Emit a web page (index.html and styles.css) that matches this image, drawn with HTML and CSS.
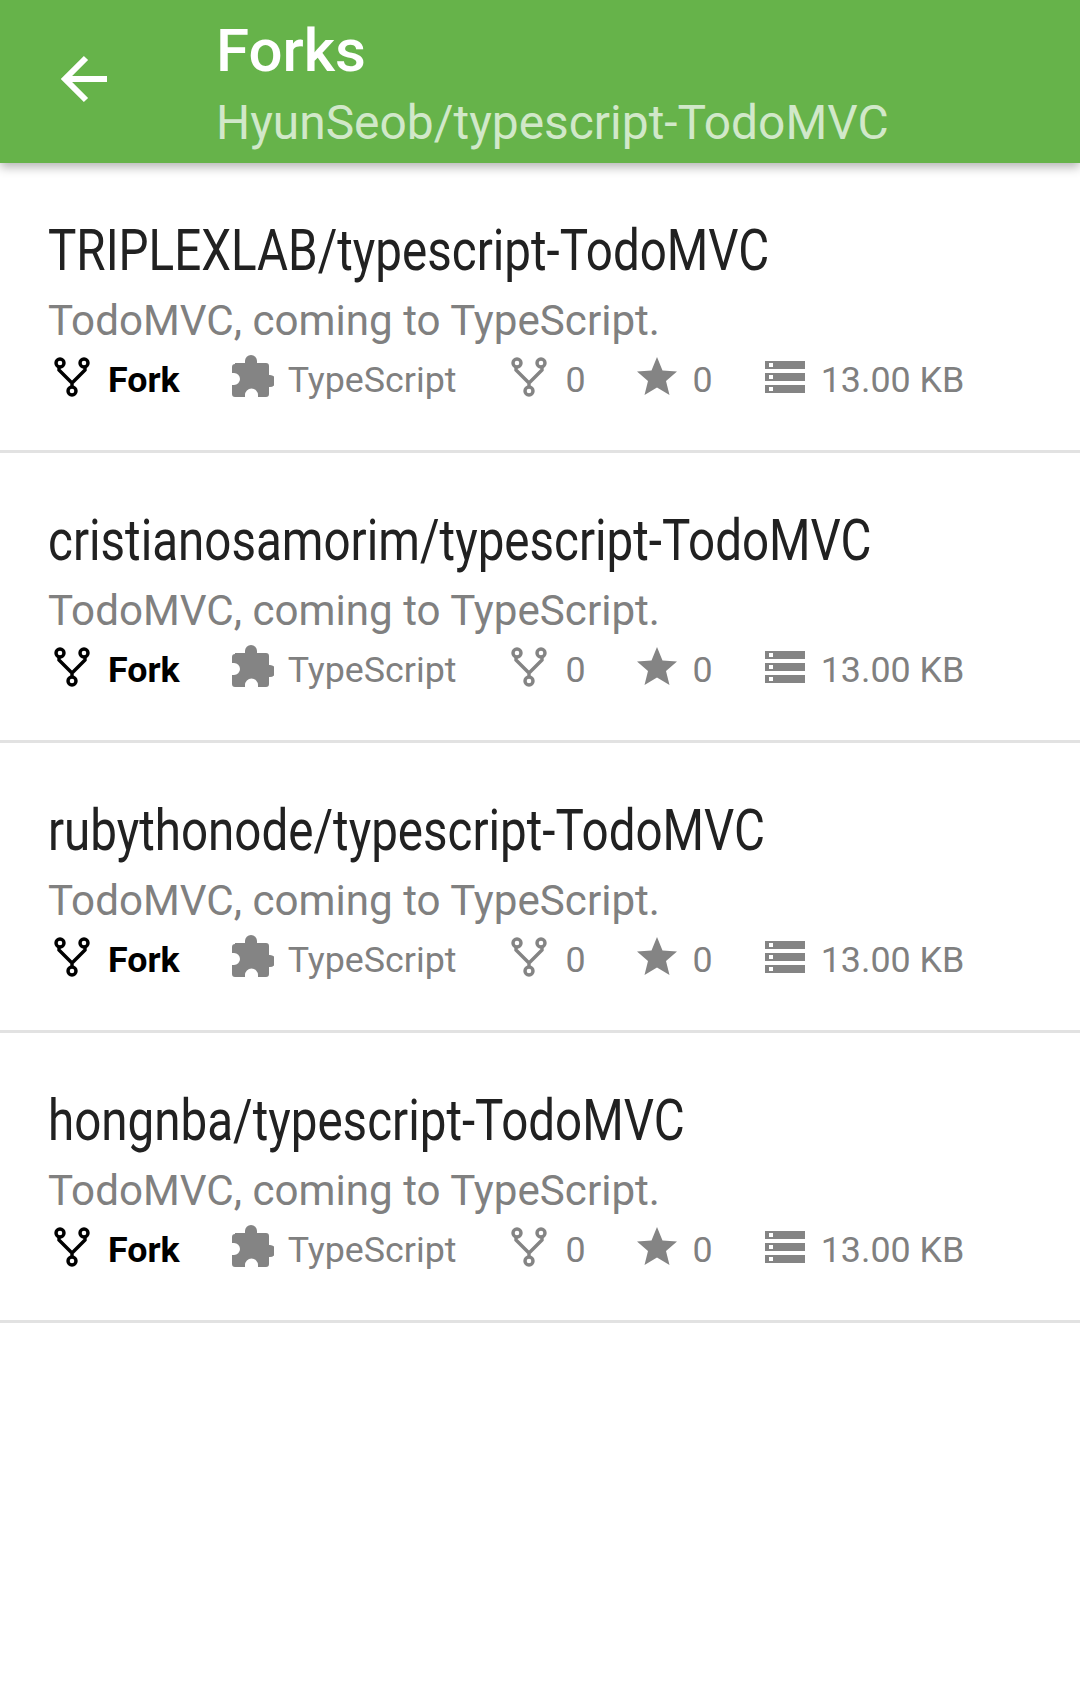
FILE: index.html
```html
<!DOCTYPE html>
<html lang="en">
<head>
    <meta charset="UTF-8">
    <title>Forks</title>
    <link rel="stylesheet" href="styles.css">
</head>
<body>
    <svg class="defs" width="0" height="0">
        <symbol id="i-fork" viewBox="0 0 36 40">
            <circle cx="6" cy="6" r="4" fill="none" stroke="currentColor" stroke-width="3.4"/>
            <circle cx="30" cy="6" r="4" fill="none" stroke="currentColor" stroke-width="3.4"/>
            <circle cx="18" cy="34" r="4" fill="none" stroke="currentColor" stroke-width="3.4"/>
            <path d="M5 10V13L18 26 31 13V10M18 26V30" fill="none" stroke="currentColor" stroke-width="3.4"/>
        </symbol>
        <symbol id="i-puzzle" viewBox="0 0 42 42">
            <path fill="currentColor" d="M3 8h10V6a6 6 0 0 1 12 0v2h9a3 3 0 0 1 3 3v9h1a6 6 0 0 1 0 12h-1v7a3 3 0 0 1-3 3h-8v-2a6.500 6.500 0 0 0-13 0v2H3a3 3 0 0 1-3-3v-9h2a6 6 0 0 0 0-12H0v-6a3 3 0 0 1 3-3z"/>
        </symbol>
        <symbol id="i-star" viewBox="0 0 40 38">
            <path fill="currentColor" d="M20 0l5.500 13.500 14.500 1-11 9.500 3.500 14L20 30.500 7.500 38 11 24 0 14.500l14.500-1z"/>
        </symbol>
        <symbol id="i-size" viewBox="0 0 40 32">
            <path fill="currentColor" fill-rule="evenodd" d="M0 0h40v8H0zM4 2v4h4V2zM0 12h40v8H0zM4 14v4h4v-4zM0 24h40v8H0zM4 26v4h4v-4z"/>
        </symbol>
    </svg>

    <header class="toolbar">
        <svg class="back" viewBox="0 0 48 48"><path d="M47 24H4M26 3 5 24l21 21" fill="none" stroke="currentColor" stroke-width="6"/></svg>
        <div class="toolbar-text">
            <div class="toolbar-title">Forks</div>
            <div class="toolbar-sub">HyunSeob/typescript-TodoMVC</div>
        </div>
    </header>

    <div class="list">
        <div class="repo">
            <div class="repo-name"><span>TRIPLEXLAB/typescript-TodoMVC</span></div>
            <div class="repo-desc">TodoMVC, coming to TypeScript.</div>
            <div class="meta">
                <span class="meta-item fork-tag"><svg class="ic ic-fork"><use href="#i-fork"/></svg>Fork</span>
                <span class="meta-item lang"><svg class="ic ic-puzzle"><use href="#i-puzzle"/></svg>TypeScript</span>
                <span class="meta-item forks"><svg class="ic ic-fork"><use href="#i-fork"/></svg>0</span>
                <span class="meta-item stars"><svg class="ic ic-star"><use href="#i-star"/></svg>0</span>
                <span class="meta-item size"><svg class="ic ic-size"><use href="#i-size"/></svg>13.00 KB</span>
            </div>
        </div>
        <div class="repo">
            <div class="repo-name"><span>cristianosamorim/typescript-TodoMVC</span></div>
            <div class="repo-desc">TodoMVC, coming to TypeScript.</div>
            <div class="meta">
                <span class="meta-item fork-tag"><svg class="ic ic-fork"><use href="#i-fork"/></svg>Fork</span>
                <span class="meta-item lang"><svg class="ic ic-puzzle"><use href="#i-puzzle"/></svg>TypeScript</span>
                <span class="meta-item forks"><svg class="ic ic-fork"><use href="#i-fork"/></svg>0</span>
                <span class="meta-item stars"><svg class="ic ic-star"><use href="#i-star"/></svg>0</span>
                <span class="meta-item size"><svg class="ic ic-size"><use href="#i-size"/></svg>13.00 KB</span>
            </div>
        </div>
        <div class="repo">
            <div class="repo-name"><span>rubythonode/typescript-TodoMVC</span></div>
            <div class="repo-desc">TodoMVC, coming to TypeScript.</div>
            <div class="meta">
                <span class="meta-item fork-tag"><svg class="ic ic-fork"><use href="#i-fork"/></svg>Fork</span>
                <span class="meta-item lang"><svg class="ic ic-puzzle"><use href="#i-puzzle"/></svg>TypeScript</span>
                <span class="meta-item forks"><svg class="ic ic-fork"><use href="#i-fork"/></svg>0</span>
                <span class="meta-item stars"><svg class="ic ic-star"><use href="#i-star"/></svg>0</span>
                <span class="meta-item size"><svg class="ic ic-size"><use href="#i-size"/></svg>13.00 KB</span>
            </div>
        </div>
        <div class="repo">
            <div class="repo-name"><span>hongnba/typescript-TodoMVC</span></div>
            <div class="repo-desc">TodoMVC, coming to TypeScript.</div>
            <div class="meta">
                <span class="meta-item fork-tag"><svg class="ic ic-fork"><use href="#i-fork"/></svg>Fork</span>
                <span class="meta-item lang"><svg class="ic ic-puzzle"><use href="#i-puzzle"/></svg>TypeScript</span>
                <span class="meta-item forks"><svg class="ic ic-fork"><use href="#i-fork"/></svg>0</span>
                <span class="meta-item stars"><svg class="ic ic-star"><use href="#i-star"/></svg>0</span>
                <span class="meta-item size"><svg class="ic ic-size"><use href="#i-size"/></svg>13.00 KB</span>
            </div>
        </div>
    </div>
</body>
</html>
```
FILE: styles.css
```css
html, body { margin: 0; padding: 0; background: #fff; }
body { font-family: Roboto, sans-serif; width: 1080px; height: 1699px; overflow: hidden; }
.defs { display: block; height: 0; }

.toolbar { height: 163px; background: #66b34a; color: #fff; display: flex; box-shadow: 0 4px 10px rgba(0,0,0,.3); }
.back { width: 48px; height: 48px; margin: 55px 0 0 60px; flex: none; }
.toolbar-text { margin-left: 108px; padding-top: 15px; }
.toolbar-title { font-size: 60px; font-weight: 500; line-height: 72px; }
.toolbar-sub { font-size: 47.9px; line-height: 72px; color: #d1e8c9; }

.repo { height: 287px; border-bottom: 3px solid #e2e2e2; padding-left: 48px; overflow: hidden; }
.repo-name { font-size: 57px; line-height: 64px; padding-top: 56px; color: #212121; white-space: nowrap; }
.repo-name span { display: inline-block; transform: scaleX(.834); transform-origin: left; }
.repo-desc { font-size: 42.15px; line-height: 56px; margin-top: 10px; color: #808080; }

.meta { display: flex; align-items: center; font-size: 35.8px; color: #808080; height: 44px; margin: 9px 0 0 6px; }
.meta-item { display: flex; align-items: center; margin-right: 52px; }
.ic { display: block; margin: -6px 18px 0 0; color: #848484; flex: none; }
.ic-fork { width: 36px; height: 40px; }
.ic-puzzle { width: 42px; height: 42px; margin-top: -8px; }
.ic-star { width: 40px; height: 38px; margin-top: -8px; }
.ic-size { width: 40px; height: 32px; }
.fork-tag { font-weight: 700; color: #000; }
.fork-tag .ic { color: #000; }
.lang .ic { margin-right: 14px; }
.lang { margin-right: 55px; }
.forks { margin-right: 51px; }
.stars .ic { margin-right: 16px; }
.size .ic { margin-right: 16px; }
```
